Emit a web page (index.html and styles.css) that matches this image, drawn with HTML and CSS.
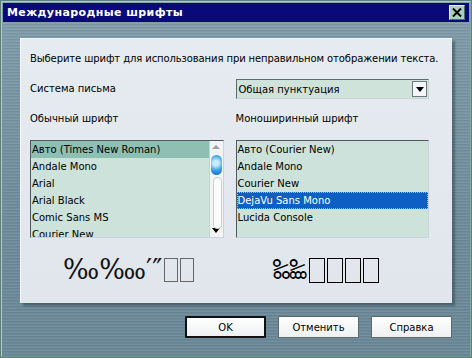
FILE: index.html
```html
<!DOCTYPE html>
<html lang="ru">
<head>
    <meta charset="UTF-8">
    <title>Международные шрифты</title>
    <link rel="stylesheet" href="styles.css">
</head>
<body>
    <div class="window">
        <div class="titlebar">
            <span class="title">Международные шрифты</span>
            <span class="close">
                <svg width="10" height="9" viewBox="0 0 10 9"><path d="M1 0.5 L9 8.5 M9 0.5 L1 8.5" stroke="#000" stroke-width="2"/></svg>
            </span>
        </div>

        <div class="client">
            <div class="panel">
                <p class="intro">Выберите шрифт для использования при неправильном отображении текста.</p>

                <div class="row">
                    <label class="col">Система письма</label>
                    <div class="col">
                        <div class="combo">
                            <span class="combo-value">Общая пунктуация</span>
                            <span class="combo-btn"><span class="tri-down"></span></span>
                        </div>
                    </div>
                </div>

                <div class="row labels">
                    <label class="col">Обычный шрифт</label>
                    <label class="col">Моноширинный шрифт</label>
                </div>

                <div class="row">
                    <div class="col">
                        <div class="listbox">
                            <ul class="items">
                                <li class="sel-teal">Авто (Times New Roman)</li>
                                <li>Andale Mono</li>
                                <li>Arial</li>
                                <li>Arial Black</li>
                                <li>Comic Sans MS</li>
                                <li>Courier New</li>
                            </ul>
                            <div class="scrollbar">
                                <span class="arrow-up"></span>
                                <div class="track">
                                    <span class="thumb"></span>
                                    <span class="pill"></span>
                                </div>
                                <span class="arrow-down"></span>
                            </div>
                        </div>
                    </div>
                    <div class="col">
                        <div class="listbox">
                            <ul class="items">
                                <li>Авто (Courier New)</li>
                                <li>Andale Mono</li>
                                <li>Courier New</li>
                                <li class="sel-blue">DejaVu Sans Mono</li>
                                <li>Lucida Console</li>
                            </ul>
                        </div>
                    </div>
                </div>

                <div class="row samples">
                    <div class="col sample serif">‰‱′″<span class="box grey"></span><span class="box grey"></span></div>
                    <div class="col sample mono">‰‱<span class="box"></span><span class="box"></span><span class="box"></span><span class="box"></span></div>
                </div>
            </div>

            <div class="buttons">
                <button class="btn default">OK</button>
                <button class="btn">Отменить</button>
                <button class="btn">Справка</button>
            </div>
        </div>
    </div>
</body>
</html>
```

FILE: styles.css
```css
body {
    margin: 0;
    font-family: "DejaVu Sans", Verdana, sans-serif;
    font-size: 10px;
    color: #000;
}
.window {
    width: 472px;
    height: 358px;
    box-sizing: border-box;
    border: 2px solid #a6cfc6;
    border-right-color: #7fa9a0;
    border-bottom-color: #6f9890;
    outline: 1px solid #5e7f7a;
    outline-offset: -1px;
    background:
        repeating-linear-gradient(180deg, rgba(255,255,255,0.06) 0 1px, rgba(0,0,0,0.05) 1px 2px, rgba(255,255,255,0) 2px 3px),
        linear-gradient(180deg, #829dab 0%, #708c9b 60%, #6b8898 100%);
    display: flex;
    flex-direction: column;
}
.titlebar {
    height: 19px;
    margin: 1px 1px 0 1px;
    background: #09097a;
    color: #fff;
    display: flex;
    align-items: center;
    justify-content: space-between;
    padding: 0 4px 0 4px;
}
.title {
    font-weight: bold;
    font-size: 11px;
    letter-spacing: 0.4px;
}
.close {
    width: 14px;
    height: 13px;
    background: #a9cfc4;
    border: 1px solid #e6f4f0;
    border-right-color: #4d6f69;
    border-bottom-color: #4d6f69;
    display: flex;
    align-items: center;
    justify-content: center;
}
.client {
    flex: 1;
    padding: 16px 18px 0 18px;
    display: flex;
    flex-direction: column;
}
.panel {
    height: 265px;
    box-sizing: border-box;
    background: linear-gradient(180deg, #e6ebf0, #e0e6ec);
    border-top: 1px solid #f4f7f9;
    border-left: 1px solid #f4f7f9;
    box-shadow: 3px 3px 2px rgba(40,55,65,0.45);
    padding: 13px 23px 0 9px;
}
.intro {
    margin: 0 0 13px 0;
    line-height: 14px;
    white-space: nowrap;
    letter-spacing: -0.1px;
}
.row {
    display: flex;
    gap: 12px;
}
.col {
    flex: 1;
    display: block;
}
.row > label.col {
    line-height: 20px;
}
.labels {
    margin-top: 10px;
    margin-bottom: 11px;
}
.combo {
    height: 20px;
    box-sizing: border-box;
    border: 1px solid #5f6a70;
    border-right-color: #c9d3d8;
    border-bottom-color: #c9d3d8;
    background: #cfe3db;
    display: flex;
    align-items: center;
}
.combo-value {
    flex: 1;
    padding-left: 2px;
}
.combo-btn {
    width: 15px;
    height: 16px;
    margin-right: 1px;
    background: #f3f5f6;
    border: 1px solid #6e777c;
    box-sizing: border-box;
    display: flex;
    align-items: center;
    justify-content: center;
}
.tri-down {
    width: 0;
    height: 0;
    border-left: 4px solid transparent;
    border-right: 4px solid transparent;
    border-top: 5px solid #000;
}
.listbox {
    height: 98px;
    box-sizing: border-box;
    border-top: 1px solid #4f5a5f;
    border-left: 1px solid #4f5a5f;
    border-right: 1px solid #c9d3d8;
    border-bottom: 1px solid #c9d3d8;
    background: #cce2da;
    display: flex;
    overflow: hidden;
}
.items {
    list-style: none;
    margin: 0;
    padding: 0;
    flex: 1;
}
.items li {
    height: 17px;
    line-height: 17px;
    padding-left: 1px;
    white-space: nowrap;
}
.sel-teal {
    background: #8dbfb2;
}
.sel-blue {
    background: #0e5fc4;
    color: #fff;
    outline: 1px dotted #9bc0ee;
    outline-offset: -1px;
}
.scrollbar {
    width: 13px;
    background: #f2f4f4;
    border-left: 1px solid #c8d0d0;
    display: flex;
    flex-direction: column;
    align-items: center;
}
.arrow-up, .arrow-down {
    width: 0;
    height: 0;
    margin: 4px 0;
    border-left: 4px solid transparent;
    border-right: 4px solid transparent;
}
.arrow-up {
    border-bottom: 4px solid #9aa2a4;
}
.arrow-down {
    border-top: 5px solid #000;
}
.track {
    flex: 1;
    width: 11px;
    position: relative;
}
.thumb {
    position: absolute;
    left: 0;
    top: 2px;
    width: 11px;
    height: 20px;
    border-radius: 6px;
    background: radial-gradient(circle at 45% 40%, #c8ecff 0 20%, #3aa0e6 55%, #1566b8 100%);
}
.pill {
    position: absolute;
    left: 2px;
    top: 24px;
    width: 7px;
    height: 50px;
    border-radius: 4px;
    background: #fbfcfc;
    border: 1px solid #c9d0d2;
}
.samples {
    margin-top: 9px;
    height: 46px;
    align-items: center;
}
.sample {
    display: flex;
    align-items: center;
    line-height: 28px;
}
.serif {
    font-family: "DejaVu Serif", "Liberation Serif", serif;
    font-size: 27px;
    padding-left: 33px;
    color: #111;
}
.mono {
    font-family: "DejaVu Sans Mono", monospace;
    font-size: 28px;
    padding-left: 42px;
}
.box {
    display: inline-block;
    width: 14px;
    height: 23px;
    border: 1px solid #000;
    margin-left: 2px;
}
.box.grey {
    border-color: #666;
    width: 12px;
    height: 22px;
    margin-left: 2px;
}
.buttons {
    display: flex;
    justify-content: flex-end;
    gap: 12px;
    padding-top: 13px;
}
.btn {
    width: 81px;
    height: 22px;
    font-family: "DejaVu Sans", Verdana, sans-serif;
    font-size: 10px;
    background: linear-gradient(180deg, #ffffff, #eef0f1);
    border: 1px solid #5c6a70;
    border-radius: 1px;
    padding: 0;
    color: #000;
}
.btn.default {
    border: 2px solid #111;
}
```
